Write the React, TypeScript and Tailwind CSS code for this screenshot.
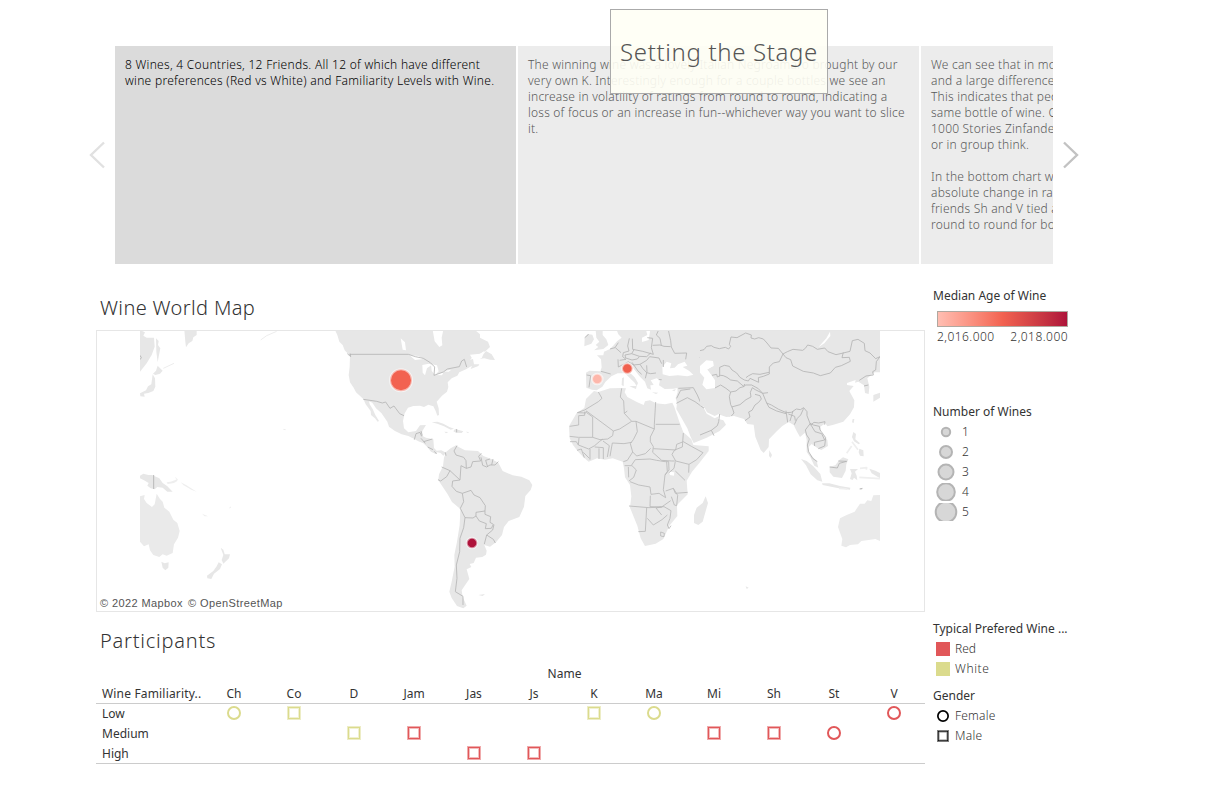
import React from "react";

const names = ["Ch", "Co", "D", "Jam", "Jas", "Js", "K", "Ma", "Mi", "Sh", "St", "V"];

type Shape = "circle" | "square";
type Cell = { shape: Shape; color: string };
const RED = "#e15759";
const WHITE = "#dbdb8d";

const rows: { label: string; cells: Record<string, Cell> }[] = [
  {
    label: "Low",
    cells: {
      Ch: { shape: "circle", color: WHITE },
      Co: { shape: "square", color: WHITE },
      K: { shape: "square", color: WHITE },
      Ma: { shape: "circle", color: WHITE },
      V: { shape: "circle", color: RED },
    },
  },
  {
    label: "Medium",
    cells: {
      D: { shape: "square", color: WHITE },
      Jam: { shape: "square", color: RED },
      Mi: { shape: "square", color: RED },
      Sh: { shape: "square", color: RED },
      St: { shape: "circle", color: RED },
    },
  },
  {
    label: "High",
    cells: {
      Jas: { shape: "square", color: RED },
      Js: { shape: "square", color: RED },
    },
  },
];

function Mark({ shape, color, size = 14 }: { shape: Shape; color: string; size?: number }) {
  return (
    <svg width={size} height={size} viewBox="0 0 14 14" fill="none" stroke={color}>
      {shape === "circle" ? (
        <circle cx="7" cy="7" r="6" strokeWidth="2" />
      ) : (
        <>
          <rect x="0.5" y="0.5" width="13" height="13" strokeWidth="1" opacity="0.5" />
          <rect x="1.5" y="1.5" width="11" height="11" strokeWidth="1" />
          <rect x="2.5" y="2.5" width="9" height="9" strokeWidth="1" opacity="0.4" />
        </>
      )}
    </svg>
  );
}

function Card({ lines, active = false }: { lines: string[]; active?: boolean }) {
  return (
    <div
      className={
        active
          ? "h-full w-[401px] shrink-0 bg-[#dbdbdb] pt-[11px] pl-[10px] tracking-[0.28px] text-black"
          : "h-full w-[401px] shrink-0 bg-[#ececec] pt-[11px] pl-[10px] tracking-[0.215px] text-[#595959]"
      }
    >
      {lines.map((line, i) => (
        <div key={i} className="h-4 text-[12px] leading-4 whitespace-pre">
          {line}
        </div>
      ))}
    </div>
  );
}

function WorldMap() {
  return (
    <svg className="block" width="740" height="280" viewBox="140 331 740 280">
      <g fill="#e7e7e7" strokeLinejoin="round">
        {/* Western Pacific */}
        <g transform="translate(130 325) scale(.33333)">
          <path d="M30 15L45 22 40 32 50 38 72 38 74 65 65 90 50 115 30 140ZM78 40L86 48 84 60 91 70 86 95 83 112 79 80ZM83 122L98 137 90 146 76 150 69 146 78 137ZM68 148L75 160 76 185 70 198 55 204 42 206 44 215 31 214 30 205 48 196 54 184 64 178ZM163 15L200 15 200 30 190 37 187 48 176 55 168 67 166 50Z" />
          <path d="M30 452L40 446 55 450 66 450 88 460 98 474 112 484 128 500 112 500 98 488 82 486 74 493 62 490 52 482 56 474 42 466 30 460Z" />
          <path d="M110 472L122 470 138 464 143 467 132 474 113 477ZM135 455L144 464 140 466ZM152 472L168 480 200 500 184 494 160 480ZM216 566L234 574 224 574Z" opacity=".7" />
          <path d="M30 514L44 510 42 522 50 534 66 546 74 538 80 506 90 522 98 530 103 548 118 560 130 584 142 594 149 618 144 638 132 658 128 684 110 692 98 688 88 696 70 690 60 676 56 658 42 664 30 650Z" fill="#eaeaea" />
          <path d="M94 710L104 715 116 712 115 728 106 736 98 728ZM272 668L280 674 284 688 300 688 297 700 280 716 275 705 280 690ZM266 712L276 718 270 732 252 746 244 762 232 760 231 752 250 738 260 724Z" />
          <path d="M392 45L410 32 440 19M100 130L132 115M460 313L467 314M298 549L303 546" fill="none" stroke="#ededed" strokeWidth="3" />
          <path d="M30 91L34 98 30 104M71 450V492" fill="none" stroke="#b9b9b9" strokeWidth="3" />
        </g>

        {/* The Americas */}
        <g transform="translate(320 325) scale(.33333)">
          <path d="M25 15L45 15 52 30 58 50 68 60 74 76 90 92 89 125 86 150 90 172 101 188 108 202 130 222 137 238 152 258 153 270 165 280 173 290 177 288 166 270 158 252 149 238 147 229 157 233 168 250 184 264 202 290 207 305 225 318 245 328 265 333 283 342 295 349 310 355 322 366 333 380 347 387 352 382 362 384 370 392 378 383 364 376 350 377 342 369 340 343 318 338 306 332 307 318 318 300 300 301 288 318 265 322 252 310 249 288 254 265 264 248 280 243 300 242 312 246 325 239 340 244 347 258 352 272 357 270 356 250 350 230 366 212 381 200 385 186 383 172 395 160 412 152 418 142 438 133 456 122 452 132 475 123 478 118 462 118 459 102 450 104 462 92 480 86 497 78 510 66 504 50 480 38 480 28 465 15Z" />
          <path d="M498 78L515 88 525 105 510 104 493 100 480 101ZM335 292L352 290 370 296 388 306 402 311 392 314 372 304 352 296ZM405 312L430 319 425 324 408 323 400 319ZM373 320L385 321 378 325ZM437 320L447 321 444 324Z" />
          <path d="M372 398L379 380 392 370 408 361 416 366 435 376 460 377 474 378 490 393 514 402 535 413 548 438 578 451 604 455 628 466 637 480 632 495 616 513 612 545 598 576 566 588 552 606 546 630 528 652 510 665 493 660 500 677 498 689 487 696 468 698 461 714 449 717 454 726 440 733 448 762 434 782 425 796 428 816 440 842 430 850 411 843 395 819 388 800 395 770 404 725 403 690 411 650 419 600 421 552 396 531 383 508 366 482 355 466 357 448 369 424Z" />
          <path d="M475 810L495 807 488 813ZM622 837L630 838Z" />
          <path d="M338 15L370 15 365 38 367 61 358 66 344 49ZM242 40L255 52 258 76 248 74ZM268 90L295 93 310 102 285 105ZM307 120L326 116 336 119 321 130 315 151 308 143ZM333 118L351 121 356 139 345 151 335 137ZM344 150L371 142 366 151ZM368 139L394 134 386 140ZM450 89L481 86 492 78 486 98 466 108 455 98Z" fill="#fff" />
          <path d="M88 88H265L286 95 310 100 331 113 344 126 342 151 370 141 382 132 418 125 425 108 433 103 440 126M82 86L92 95 91 86M130 223L170 229 187 234 197 231 210 250 222 243 239 266 252 272M283 344L288 326 300 322 305 334M303 318L307 332M303 340L316 355M311 350L337 342M323 366L339 374M343 379L350 387M376 382L378 392M410 312V322M411 362L402 378 408 390 431 397 438 407 439 430 423 422 420 465M439 430L453 426 458 410 482 408 476 394 484 385M483 397L488 421 500 426 510 420 525 420 535 410M503 426L497 406 510 402M515 420L519 402M365 426L390 437 420 465 398 468 396 484 409 499 427 505 453 496M390 437L380 455 362 468 354 464M427 505L431 530 421 550 435 578 459 579 468 573 468 562 495 558 496 542 480 518 462 510 453 496M435 578L431 608 420 640 419 680 409 720 411 760 406 800 429 814 429 840M468 573L478 588 499 596 496 611 514 610 520 598 510 592 512 575 495 568 495 558M522 599L518 615 500 630 493 657M500 630L520 643 526 654" fill="none" stroke="#b4b4b4" strokeWidth="2.5" />
        </g>

        {/* Europe, Africa and the Middle East */}
        <g transform="translate(550 325) scale(.33333)">
          <path d="M104 40L112 27 127 29 132 43 124 56 103 64ZM137 15L158 15 158 30 169 43 175 60 160 72 132 76 145 66 137 60 148 50 139 38Z" />
          <path d="M200 15L205 28 215 38 201 49 191 61 180 72 162 80 160 91 141 91 153 103 155 127 151 139 118 137 108 143 109 188 126 194 140 196 157 185 166 171 184 154 203 145 225 145 240 160 254 173 260 184 264 174 254 157 238 142 237 130 250 130 270 155 285 170 292 190 303 194 301 181 311 180 302 166 320 160 330 166 327 181 344 192 370 191 382 189 383 202 377 219 381 234 379 252 395 280 412 310 422 336 431 354 470 338 509 318 528 299 520 286 503 281 507 274 494 280 470 266 457 240 470 238 495 260 540 276V15ZM216 160L222 157 221 184 215 180ZM238 184L260 182 258 192ZM366 196L378 192 373 199ZM306 202L325 203 318 207Z" />
          <path d="M132 198L145 201 180 190 215 189 228 190 224 202 232 216 262 232 281 240 285 229 300 226 318 235 345 238 367 233 373 246 387 287 400 322 424 343 430 360 476 364 476 378 448 414 426 440 410 467 413 508 381 540 382 573 358 602 340 642 317 656 285 663 272 640 262 602 240 548 244 514 240 480 225 457 222 430 218 410 188 400 165 404 141 400 116 410 100 397 81 376 69 360 59 340 57 304 80 264 103 249 108 222Z" fill="#e8e8e8" />
          <path d="M467 514L474 534 458 590 445 600 432 594 432 570 440 548 458 534Z" />
          <path d="M338 148L337 126 350 110 364 115 360 130 374 128 384 118 404 110 412 122 398 126 418 138 430 149 412 154 384 151 358 153ZM467 119L482 108 502 112 500 125 485 132 496 158 496 183 478 190 465 181 472 160 460 143ZM300 19L296 45 276 51 276 38 292 30 288 15H301ZM357 440L373 442 372 452 360 450Z" fill="#fff" />
          <path d="M116 28L104 38M238 40L233 63 237 78 220 83 218 95 228 103 209 106M205 53L195 68 180 72M196 68L213 83M247 41L248 73 278 79 310 88 304 68 308 40 292 38M308 61L330 60 342 64 362 65M326 15L319 30 330 40 334 61M355 15L362 47 364 66 374 85 410 84 407 103M252 74L245 86 268 94 290 95 302 84M245 86L225 90 227 99 246 105 262 102 268 95M204 103L205 126 235 110 250 120 270 118 290 106 299 95 327 99 335 116M270 118L278 130 290 143 302 146 318 144M246 112L264 138 275 148M290 121L291 140 286 160M153 139L182 147M110 150L122 152 117 187M340 105L340 126M335 164L326 164M385 190L430 188 442 210 455 240M380 220L392 196 421 192M379 235L412 218 435 230 461 249 466 242M450 97L460 110M510 123L509 154M496 155L520 150 540 166" fill="none" stroke="#b5b5b5" strokeWidth="2.5" />
          <path d="M145 201L156 220 145 230 104 255 82 263 108 264 109 258 190 318 209 312 245 289 223 265 221 228 211 216 215 190M104 260V271L86 272 86 300 59 304M110 263L128 276V337H85L59 334M245 289L258 289 313 312V298L317 231M317 298H389M313 312L301 336 301 350 310 365 308 382 335 406 365 408 374 408M258 289L262 320 250 344 241 356 248 381 260 393 286 386 302 370M223 265L232 258M128 337L150 344 173 342 188 332 190 318M60 350L79 350 85 360 116 372 134 362 149 349 159 342M87 339L85 360M81 376L94 372 103 398M100 382L118 400M120 372V404M147 370V402M134 366L160 368 160 402M159 348L178 362 172 396M180 394L187 354 222 356 245 352M220 410L232 406 248 381M245 420L256 404 300 402 320 406 345 410M224 422L246 422 259 435 251 457 237 468M240 470L266 480 300 486 303 508 327 505 347 518 340 494 345 450 352 440 350 410M345 410L356 410 357 435 345 450M376 409L372 430 356 444M374 375L397 366 400 324M374 375L366 388 377 408 417 418 440 404 459 383 424 364 400 350 380 358 377 375 310 371M417 418L416 443M376 438L405 466M347 498L370 490 376 505 413 502M370 490L383 511 380 542 373 540 364 515M300 545L301 512M300 545L335 546 362 527M237 543L297 548 319 547 342 545 363 557 360 580 352 600 357 611 363 602M290 549L286 619 265 620M292 580L310 600 336 584 352 570M332 621L343 625 342 635 332 633ZM335 546L318 549 335 570M235 426L236 457" fill="none" stroke="#b8b8b8" strokeWidth="2.5" />
        </g>

        {/* Asia and Western Australia */}
        <g transform="translate(700 325) scale(.33333)">
          <path d="M0 15H540V142L524 142 502 160 508 185 506 207 495 204 492 181 475 170 465 173 467 165 441 174 441 180 461 183 448 198 463 226 462 247 450 268 430 290 398 300 382 304 376 295 361 305 363 321 382 345 384 363 364 375 356 371 343 363 335 357 326 366 327 383 341 399 350 409 355 428 343 422 331 397 320 381 320 344 315 323 300 336 291 320 281 300 266 291 247 303 231 318 207 343 206 366 191 384 182 375 166 335 161 299 142 297 132 282 102 273 79 276 62 270 58 266 44 273 21 262 12 245 0 241V178L19 193 44 190 45 168 30 145 21 134 40 122 39 108 20 106 0 125Z" />
          <path d="M208 376L216 390 212 399 207 393ZM303 402L320 408 340 424 361 447 367 470 352 466 332 448 318 421ZM366 475L388 475 420 483 451 488 450 494 412 489 368 480ZM389 425L406 421 418 405 429 397 445 403 439 418 437 437 426 459 400 455 389 442ZM450 432L474 432 465 440 470 452 472 466 462 458 458 465 450 462 455 445ZM460 321L468 327 466 343 480 355 476 358 462 349 456 336ZM478 371L490 376 491 394 480 392 476 382ZM458 282L463 282 461 294 456 292ZM508 431L526 437 540 444V460L515 445ZM520 210L540 203V218L520 230ZM478 490L490 490 483 496Z" />
          <path d="M480 430L500 428 499 434M455 363L440 385M478 457L540 461M417 490L442 492M456 350L474 374" fill="none" stroke="#efefef" strokeWidth="5" />
          <path d="M414 606L420 580 440 570 464 560 480 536 494 536 502 526 514 528 520 511 540 510V648L526 642 506 645 484 648 474 658 450 660 438 667 424 662 427 642 419 620Z" fill="#eaeaea" />
          <path d="M390 20L391 33 373 55 355 67 359 62 379 40ZM0 123L19 106 39 108 41 123 21 133 45 166 45 189 19 193 7 179 13 158 0 143Z" fill="#fff" />
          <path d="M137 784L146 788 140 792Z" />
          <path d="M0 77L12 74 20 64 34 62 42 67 58 71 76 67 86 72 92 64 88 58 93 36 111 38 137 24 154 30 153 39 164 42 176 38 190 42 201 54 213 69 235 70 249 87 238 110 220 114 208 126 208 147 190 154 175 158 176 172 150 160 145 168 133 165 120 157 110 144 96 135 88 124 73 121 59 127 59 154M249 87L262 80 279 73 308 76 316 70 323 60 338 64 352 73 374 69 384 80 408 89 430 84 450 79 457 47 474 43 493 55 495 77 510 84 527 101 540 95M249 87L258 98 272 104 278 123 310 139 340 144 361 152 391 144 406 127 424 122 451 109 448 97 426 98 430 82M36 151L50 148 52 156 62 151 70 152 81 157 92 165 112 168 132 185 136 180 155 180 175 191 188 205 200 234 214 240 236 253 259 263 274 262 289 252 301 254 311 248 321 260 321 272 330 295 340 300 358 304 360 314 364 320 377 338 374 363 355 371M45 189L62 180 78 190 92 201 88 215 92 239 96 246 102 264 94 273M92 201L108 198 120 188 131 185 134 177M157 188L151 202 153 216 138 224 120 239 95 246M138 158L146 152 158 146 180 148 207 142M157 188L166 194 188 205M165 208L180 212 184 222 176 232 165 240 156 256 146 261 150 276 135 287M188 205L204 203M200 234L207 247 230 258 258 266M258 257L263 292M265 267L284 274 286 287M270 288L279 258M311 250L302 270 292 280 283 299M331 295L316 315 320 330 328 342 322 360 326 380 338 400 352 410M330 295L345 320 365 326 374 345 343 352 344 363M332 300L342 292 356 294 375 290 374 299M478 166L498 153 520 150 518 140 527 135 529 110 540 95M492 183L505 180M389 426L412 429 418 415 440 409M415 408L440 409M479 492L487 490M0 330L34 316 52 302 56 290 59 267M34 316L42 332" fill="none" stroke="#b3b3b3" strokeWidth="2.5" />
        </g>
      </g>
      <g stroke="#fff" strokeOpacity=".55" strokeWidth="2">
        <circle cx="401" cy="380.2" r="11" fill="#f26250" />
        <circle cx="597.3" cy="379" r="5.3" fill="#fdb7ab" />
        <circle cx="627.3" cy="368.5" r="5.3" fill="#f0604e" />
        <circle cx="472" cy="543" r="5.3" fill="#ae123a" />
      </g>
    </svg>
  );
}

const storyTwo = [
  "The winning wine was a lovely Italian Negroamaro brought by our",
  "very own K. Interestingly enough for a couple bottles we see an",
  "increase in volatility of ratings from round to round, indicating a",
  "loss of focus or an increase in fun--whichever way you want to slice",
  "it.",
];
const storyThree = [
  "We can see that in most",
  "and a large difference",
  "This indicates that peo",
  "same bottle of wine. O",
  "1000 Stories Zinfandel",
  "or in group think.",
  "",
  "In the bottom chart we",
  "absolute change in rati",
  "friends Sh and V tied as",
  "round to round for both",
];

export default function App() {
  return (
    <div className="relative h-[804px] w-[1230px] overflow-hidden bg-white font-['Noto_Sans',sans-serif] font-light text-[#333333]">
      <div className="flex h-[264px] pt-[46px] pl-[89px]">
        <div className="flex w-[26px] items-center">
          <svg width="16" height="28" viewBox="0 0 16 28" fill="none" stroke="#e1e1e1" strokeWidth="2.4">
            <path d="M15 1.5L2 14l13 12.5" />
          </svg>
        </div>
        <div className="flex w-[938px] gap-[2px] overflow-hidden">
          <Card
            active
            lines={[
              "8 Wines, 4 Countries, 12 Friends. All 12 of which have different",
              "wine preferences (Red vs White) and Familiarity Levels with Wine.",
            ]}
          />
          <Card lines={storyTwo} />
          <Card lines={storyThree} />
        </div>
        <div className="flex items-center pl-[9px]">
          <svg width="17" height="28" viewBox="0 0 17 28" fill="none" stroke="#c2c2c2" strokeWidth="2.4">
            <path d="M2 1.5L15 14 2 26.5" />
          </svg>
        </div>
      </div>

      <div className="flex pl-24">
        <main className="w-[829px]">
          <h2 className="flex h-[66px] items-end pb-[8px] pl-1 text-[20px] leading-7 tracking-[0.36px] whitespace-nowrap">
            Wine World Map
          </h2>
          <div className="relative h-[282px] border border-[#e6e6e6] pl-[43px]">
            <WorldMap />
            <div className="absolute bottom-0 left-0 flex h-4 items-center gap-[5px] bg-white/70 pr-[3px] pl-[3px] font-['Liberation_Sans',sans-serif] text-[11px] font-normal tracking-[0.4px] text-[#555555]">
              <span>© 2022 Mapbox</span>
              <span>© OpenStreetMap</span>
            </div>
          </div>
          <h2 className="flex h-[52px] items-start pt-[15px] pl-1 text-[20px] leading-7 tracking-[0.78px]">
            Participants
          </h2>
          <div className="w-[829px] text-[12px] font-normal">
            <div className="flex h-5 items-center justify-center pl-[108px]">Name</div>
            <div className="flex h-5 items-center border-b border-[#cccccc]">
              <div className="w-[108px] pl-[6px] tracking-[0.17px] whitespace-nowrap">Wine Familiarity..</div>
              {names.map((n) => (
                <div key={n} className="w-[60px] text-center">{n}</div>
              ))}
            </div>
            <div className="h-[60px] border-b border-[#cccccc]">
              {rows.map((row) => (
                <div key={row.label} className="flex h-5 items-center">
                  <div className="w-[108px] pl-[6px]">{row.label}</div>
                  {names.map((n) => (
                    <div key={n} className="flex w-[60px] justify-center pb-[2px]">
                      {row.cells[n] && <Mark shape={row.cells[n].shape} color={row.cells[n].color} />}
                    </div>
                  ))}
                </div>
              ))}
            </div>
          </div>
        </main>

        <aside className="w-[150px] pl-2 text-[12px]">
          <div className="h-[116px] pt-[22px]">
            <div className="h-5 leading-5 font-normal">Median Age of Wine</div>
            <div className="mt-[5px] ml-1 h-4 w-[131px] border border-[#b0a8a0] bg-linear-to-r from-[#ffbeb2] via-[#f26250] to-[#ae123a]" />
            <div className="ml-1 flex h-5 w-[131px] items-center justify-between tracking-[0.45px]">
              <span>2,016.000</span>
              <span>2,018.000</span>
            </div>
          </div>
          <div className="h-[239px] pt-[22px]">
            <div className="h-5 leading-5 font-normal">Number of Wines</div>
            {[4.2, 6, 7.5, 8.8, 10.3].map((r, i) => (
              <div key={i} className="flex h-5 items-center gap-[3px]">
                <svg width="26" height="18" viewBox="0 0 26 18">
                  <circle cx="13" cy="9" r={r} fill="#d7d7d7" stroke="#b4b4b4" strokeWidth="2" />
                </svg>
                <span>{i + 1}</span>
              </div>
            ))}
          </div>
          <div className="h-5 leading-5 font-normal whitespace-nowrap">Typical Prefered Wine ...</div>
          <div className="flex h-5 items-center gap-[5px] pl-[3px]">
            <span className="h-[14px] w-[14px] bg-[#e15759]" />
            <span>Red</span>
          </div>
          <div className="flex h-5 items-center gap-[5px] pl-[3px]">
            <span className="h-[14px] w-[14px] bg-[#dbdb8d]" />
            <span className="tracking-[0.6px]">White</span>
          </div>
          <div className="mt-[7px] h-5 leading-5 font-normal">Gender</div>
          <div className="flex h-5 items-center gap-[6px] pl-1">
            <Mark shape="circle" color="#000000" size={12} />
            <span className="tracking-[0.2px]">Female</span>
          </div>
          <div className="flex h-5 items-center gap-[6px] pl-1">
            <Mark shape="square" color="#000000" size={12} />
            <span className="tracking-[0.3px]">Male</span>
          </div>
        </aside>
      </div>

      <div className="absolute top-[9px] left-[610px] flex h-[85px] w-[218px] items-center justify-center border border-[#aaaaaa] bg-[#fffff5]/90 text-[24px] tracking-[0.65px] whitespace-nowrap text-[#555555]">
        Setting the Stage
      </div>
    </div>
  );
}
